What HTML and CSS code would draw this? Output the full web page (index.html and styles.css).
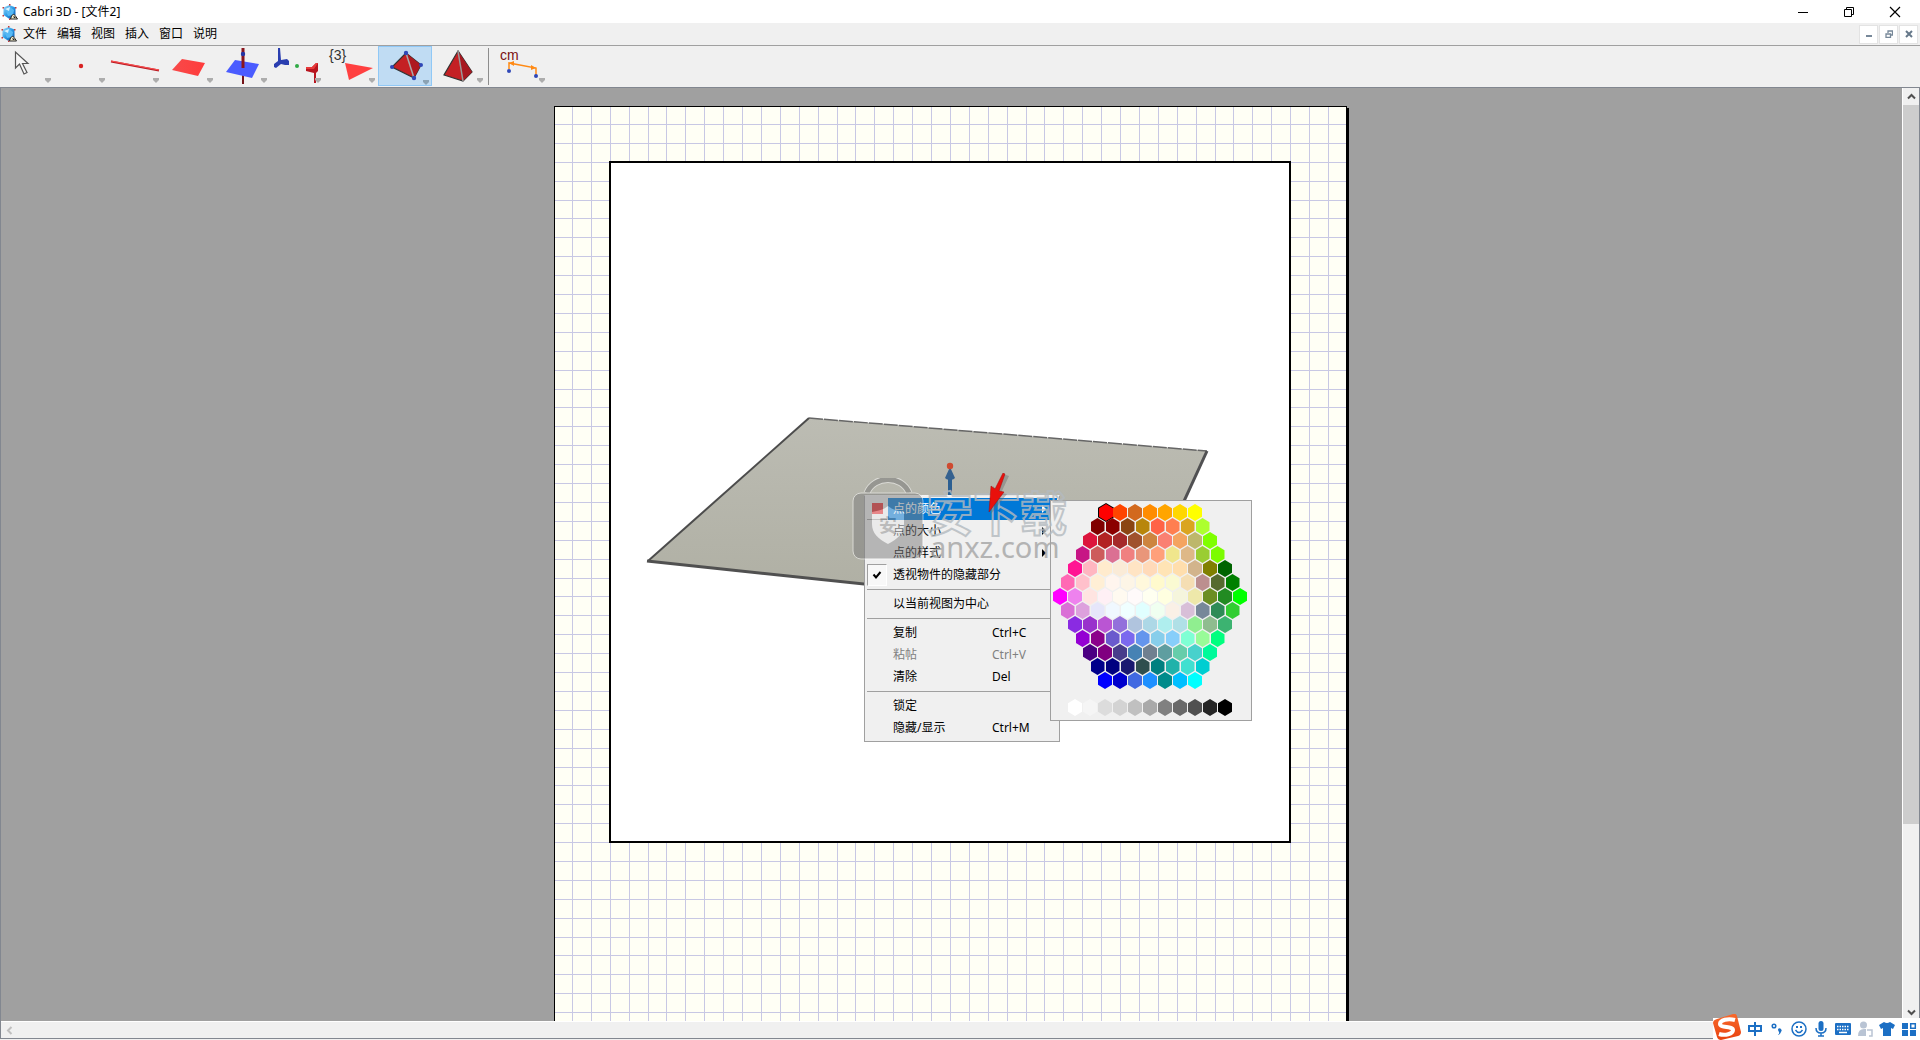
FILE: index.html
```html
<!DOCTYPE html>
<html lang="zh-CN">
<head>
<meta charset="utf-8">
<title>Cabri 3D - [文件2]</title>
<link rel="stylesheet" href="styles.css">
</head>
<body>
<svg class="defs" aria-hidden="true">
  <defs>
    <linearGradient id="gem" x1="0" y1="0" x2="1" y2="1"><stop offset="0" stop-color="#9fd8f8"/><stop offset="0.5" stop-color="#2b9be6"/><stop offset="1" stop-color="#0a4fa8"/></linearGradient>
    <linearGradient id="redface" x1="0" y1="0" x2="1" y2="0"><stop offset="0" stop-color="#f84a4a"/><stop offset="1" stop-color="#ff3c3c"/></linearGradient>
    <linearGradient id="floor" x1="0" y1="0" x2="0" y2="1"><stop offset="0" stop-color="#bcbcb3"/><stop offset="1" stop-color="#aeaea2"/></linearGradient>
    <linearGradient id="sogou" x1="0" y1="0" x2="0" y2="1"><stop offset="0" stop-color="#f8692c"/><stop offset="1" stop-color="#e8420f"/></linearGradient>
    <symbol id="app" viewBox="0 0 16 16">
      <path d="M7.500 1l6 2.500v7.500l-6 4-6-4V3.500z" fill="url(#gem)"/>
      <path d="M3 5l5-2 4 3-1 5-5 1z" fill="#55b8f4"/><path d="M3 5l5-2-1 4z" fill="#d9f2ff"/>
      <path d="M7 0h1.500v1.500H7zM.5 3H2v1.500H.5zM13 3h1.500v1.500H13zM.5 11H2v1.500H.5zM7 14.500h1.500V16H7z" fill="#c33a3a"/>
      <path d="M8.500 15l1-3 2-2 2 2 2 3z" fill="#f5efcf" stroke="#222" stroke-width="1"/><path d="M12 12v1.500h1.500" stroke="#222" fill="none"/>
    </symbol>
  </defs>
</svg>
<div class="app">
  <header class="titlebar">
    <svg class="app-icon"><use href="#app"/></svg>
    <h1>Cabri 3D - [文件2]</h1>
    <div class="window-buttons">
      <button aria-label="最小化"><svg width="12" height="12"><path d="M1 6.500h10" stroke="#000"/></svg></button>
      <button aria-label="还原"><svg width="12" height="12"><path d="M1.500 3.500h7v7h-7zM3.500 3V1.500h7v7H9" stroke="#000" fill="none"/></svg></button>
      <button aria-label="关闭"><svg width="12" height="12"><path d="M1 1l10 10M11 1L1 11" stroke="#000" stroke-width="1.200"/></svg></button>
    </div>
  </header>
  <nav class="menubar">
    <svg class="app-icon"><use href="#app"/></svg>
    <button>文件</button><button>编辑</button><button>视图</button><button>插入</button><button>窗口</button><button>说明</button>
    <div class="mdi-buttons">
      <button aria-label="最小化文档"><svg width="8" height="8"><path d="M1 6h6" stroke="#778899" stroke-width="2"/></svg></button>
      <button aria-label="还原文档"><svg width="8" height="8"><path d="M1 4h4.500v3.500H1zM3 3V1h4.500v4H6" stroke="#778899" stroke-width="1.300" fill="none"/></svg></button>
      <button aria-label="关闭文档"><svg width="8" height="8"><path d="M1 1l6 6M7 1L1 7" stroke="#66788a" stroke-width="2"/></svg></button>
    </div>
  </nav>
  <div class="toolbar">
    <button aria-label="操作"><svg viewBox="0 0 54 40"><path d="M15.500 6v16l4-4 4.500 10 3-1.500-4.500-9H28z" fill="#f7f7f7" stroke="#555" stroke-width="1.200"/><path class="drop" d="M45 32h6v2l-3 3-3-3z"/></svg></button>
    <button aria-label="点"><svg viewBox="0 0 54 40"><circle cx="27" cy="20" r="2.200" fill="#d82222"/><path class="drop" d="M45 32h6v2l-3 3-3-3z"/></svg></button>
    <button aria-label="直线"><svg viewBox="0 0 54 40"><path d="M3 15.500l48 9" stroke="#b81c24" stroke-width="2"/><path d="M3 15l48 9" stroke="#ff5050" stroke-width="1"/><path class="drop" d="M45 32h6v2l-3 3-3-3z"/></svg></button>
    <button aria-label="平面"><svg viewBox="0 0 54 40"><path d="M20 13l23 4-7 13-26-6z" fill="url(#redface)"/><path class="drop" d="M45 32h6v2l-3 3-3-3z"/></svg></button>
    <button aria-label="垂直"><svg viewBox="0 0 54 40"><path d="M27 22v16" stroke="#741318" stroke-width="2"/><path d="M19 14l24 4-7 14-26-6z" fill="#4a5cff"/><path d="M27 2v20" stroke="#8a151c" stroke-width="3"/><circle cx="27" cy="8" r="2.200" fill="#2435a5"/><path class="drop" d="M45 32h6v2l-3 3-3-3z"/></svg></button>
    <button aria-label="变换"><svg viewBox="0 0 54 40"><path d="M8 2h2l1 12 6-1 2 2v4h-4l-4-1-5 4-2-1v-3l4-3z" fill="#2a3eb0"/><circle cx="27" cy="20" r="2" fill="#30aa45"/><path d="M36 21h6l4-4h2v8l-2 2v10h-2V27l-8-2z" fill="#b8151f"/><path d="M36 21h6l4-4h2l-4 6h-8z" fill="#e83a3a"/><path class="drop" d="M45 32h6v2l-3 3-3-3z"/></svg></button>
    <button aria-label="正多边形"><svg viewBox="0 0 54 40"><text x="5" y="14" class="tool-text">{3}</text><path d="M21 17l28 5-24 12z" fill="#ff4040"/><path class="drop" d="M45 32h6v2l-3 3-3-3z"/></svg></button>
    <button class="active" aria-label="多面体" aria-pressed="true"><svg viewBox="0 0 54 40"><path d="M28 7L14 21l22 11 7-13z" fill="#c42024" stroke="#333" stroke-width="1.200"/><path d="M28 7l8 25 7-13z" fill="#ae1a20"/><path d="M28 7l8 25" stroke="#aaa" stroke-width="1.500"/><g fill="#3048b8"><circle cx="28" cy="7" r="2.200"/><circle cx="14" cy="21" r="2"/><circle cx="43" cy="19" r="2"/><circle cx="36" cy="32" r="2.200"/></g><path class="drop" d="M45 34h6v2l-3 3-3-3z"/></svg></button>
    <button aria-label="正多面体"><svg viewBox="0 0 54 40"><path d="M26 5L12 29l19 6 9-9z" fill="#c42024" stroke="#333" stroke-width="1.200"/><path d="M26 5l5 30 9-9z" fill="#a71820"/><path d="M26 5l5 30" stroke="#999" stroke-width="1.500"/><path class="drop" d="M45 32h6v2l-3 3-3-3z"/></svg></button>
    <span class="separator"></span>
    <button aria-label="测量"><svg viewBox="0 0 54 40"><text x="6" y="14" class="tool-text measure">cm</text><path d="M15 23v-6l27 5v7" stroke="#ff8a14" stroke-width="1.500" fill="none"/><path d="M15 17l5-2v5zM42 22l-5-3v5z" fill="#ff8a14"/><circle cx="15" cy="25" r="2" fill="#3048b8"/><circle cx="42" cy="30" r="2" fill="#3048b8"/><path class="drop" d="M45 32h6v2l-3 3-3-3z"/></svg></button>
  </div>

  <main class="document">
    <div class="workspace">
      <div class="page">
        <svg class="page-grid" id="page-grid"></svg>
        <div class="view">
          <svg class="scene" viewBox="611 163 678 678">
            <path d="M809 418l398 33-74 161.500L648 561z" fill="url(#floor)"/>
            <path d="M809 418l398 33" stroke="#666" stroke-width="1.500" stroke-dasharray="14 1"/>
            <path d="M809 418L648 561" stroke="#4c4c4c" stroke-width="2"/>
            <path d="M1207 451l-74 161.500" stroke="#505052" stroke-width="3"/>
            <path d="M647 561l486 51.500" stroke="#505050" stroke-width="3"/>
            <path d="M950 478v20" stroke="#2c5f92" stroke-width="4"/><path d="M950 467l5 11-2 1.500h-6l-2-1.500z" fill="#35618f"/><circle cx="950" cy="466" r="3.200" fill="#cf4a30"/>
          </svg>
        </div>

        <div class="context-menu" role="menu">
          <button class="item current"><span class="mark"><i class="swatch"></i></span><span class="label">点的颜色</span><span class="more"></span></button>
          <button class="item"><span class="mark"></span><span class="label">点的大小</span><span class="more"></span></button>
          <button class="item"><span class="mark"></span><span class="label">点的样式</span><span class="more"></span></button>
          <button class="item"><span class="mark checked"><svg width="10" height="10"><path d="M1.500 4.500L4 7.500 8.500 2" stroke="#000" stroke-width="2" fill="none"/></svg></span><span class="label">透视物件的隐藏部分</span></button>
          <hr>
          <button class="item"><span class="mark"></span><span class="label">以当前视图为中心</span></button>
          <hr>
          <button class="item"><span class="mark"></span><span class="label">复制</span><kbd>Ctrl+C</kbd></button>
          <button class="item" disabled><span class="mark"></span><span class="label">粘帖</span><kbd>Ctrl+V</kbd></button>
          <button class="item"><span class="mark"></span><span class="label">清除</span><kbd>Del</kbd></button>
          <hr>
          <button class="item"><span class="mark"></span><span class="label">锁定</span></button>
          <button class="item"><span class="mark"></span><span class="label">隐藏/显示</span><kbd>Ctrl+M</kbd></button>
        </div>
        <div class="palette" id="palette"></div>

        <div class="watermark">
          <svg class="bag" width="74" height="82" viewBox="0 0 74 82">
            <path d="M15 15C22-3 50-3 57 15" stroke="#fff" stroke-width="7" fill="none"/>
            <path d="M15 15C22-3 50-3 57 15" stroke="#777" stroke-width="5" fill="none"/>
            <rect x="1" y="15" width="70" height="66" rx="8" fill="#7c7c7c" stroke="#fff"/>
            <path d="M36 28c5 4 10 5 16 6v12c0 9-6 15-16 20-10-5-16-11-16-20V34c6-1 11-2 16-6z" fill="#e6e6e6"/>
            <text x="27" y="54" class="badge">安</text>
          </svg>
          <div class="brand"><span class="brand-name">安下载</span><span class="brand-site">anxz.com</span></div>
        </div>
        <svg class="pointer" width="24" height="42" viewBox="0 0 24 42"><path d="M18 2l3 1-8 17 6 1L3 41 5 13l4 4 7-15z" fill="#666" opacity=".4"/><path d="M15 0l2 1-6 17 5 1L1 39 3 13l4 3z" fill="#e9100c" stroke="#a50a0a" stroke-width=".5"/></svg>
      </div>
    </div>
    <div class="vscroll">
      <button aria-label="向上滚动"><svg width="9" height="9"><path d="M1 6.500l3.500-3.500L8 6.500" stroke="#505050" stroke-width="2" fill="none"/></svg></button>
      <div class="track"><div class="thumb"></div></div>
      <button aria-label="向下滚动"><svg width="9" height="9"><path d="M1 2.500L4.500 6 8 2.500" stroke="#505050" stroke-width="2" fill="none"/></svg></button>
    </div>
    <div class="hscroll"><button aria-label="向左滚动" disabled><svg width="9" height="9"><path d="M6.500 1L3 4.500 6.500 8" stroke="#bfbfbf" stroke-width="2" fill="none"/></svg></button></div>
  </main>

  <aside class="ime">
    <svg class="ime-logo" width="28" height="26" viewBox="0 0 28 26"><path d="M4 5L20 0q3-1 4 2l4 16q0 3-3 4L8 26q-3 0-4-3L0 9q0-3 4-4z" fill="url(#sogou)"/><path d="M22 6C15 4 7 6 7 10s13 2 13 6-8 6-14 4" stroke="#fff" stroke-width="4" fill="none"/></svg>
    <button aria-label="中文"><svg viewBox="0 0 16 16"><path d="M2 5h12v5H2zM8 1v14" class="line"/></svg></button>
    <button aria-label="标点"><svg viewBox="0 0 16 16"><circle cx="5" cy="5" r="1.800" class="line thin"/><path d="M9 8a2 2 0 1 1 3 3q-1 3-3 3 2-2 1-3-1-1-1-3z" fill="#1c6fc4"/></svg></button>
    <button aria-label="表情"><svg viewBox="0 0 16 16"><circle cx="8" cy="8" r="7" class="line thin"/><path d="M4.500 9q3.500 5 7 0" class="line thin"/><path d="M5 5h2v2H5zM9 5h2v2H9z" fill="#1c6fc4"/></svg></button>
    <button aria-label="语音"><svg viewBox="0 0 16 16"><rect x="5.500" y="0" width="5" height="10" rx="2.500" fill="#1c6fc4"/><path d="M3 7q0 5 5 5t5-5M8 12v3M5 15h6" class="line thin"/></svg></button>
    <button aria-label="键盘"><svg viewBox="0 0 16 16"><rect x="0" y="2" width="16" height="12" rx="1" fill="#1c6fc4"/><path d="M2 5.500h12M2 8.500h12" stroke="#fff" stroke-width="1.500" stroke-dasharray="1.500 1"/><path d="M4 11.500h8" stroke="#fff" stroke-width="1.500"/></svg></button>
    <button aria-label="账户"><svg viewBox="0 0 16 16"><circle cx="6.500" cy="4" r="3.500" fill="#b9c4d4"/><path d="M1 15q0-7 6-7h2v7z" fill="#b9c4d4"/><path d="M10 9h5v6h-3" stroke="#b9c4d4" stroke-width="1.500" fill="none"/></svg></button>
    <button aria-label="皮肤"><svg viewBox="0 0 16 16"><path d="M5 1q3 2 6 0l5 3-2 4-2-1v8H4V7L2 8 0 4z" fill="#1c6fc4"/></svg></button>
    <button aria-label="工具箱"><svg viewBox="0 0 16 16"><path d="M1 2h6v6H1zM1 9h6v6H1zM9 9h6v6H9z" fill="#1c6fc4"/><path d="M9.700 2.700h4.600v4.600H9.700z" class="line thin"/></svg></button>
  </aside>
</div>
<script src="app.js"></script>
</body>
</html>
```

FILE: app.js
```js
// Squared paper: one line every 5 mm, snapped to whole pixels.
(function () {
  var grid = document.getElementById('page-grid');
  var step = 5 * 96 / 25.4;
  var d = '';
  for (var i = 0; i < 43; i++) {
    d += 'M' + (Math.round(17 + i * step) + 0.5) + ' 0V1130';
  }
  for (var j = 0; j < 60; j++) {
    d += 'M0 ' + (Math.round(17 + j * step) + 0.5) + 'H800';
  }
  var path = document.createElementNS('http://www.w3.org/2000/svg', 'path');
  path.setAttribute('d', d);
  path.setAttribute('stroke', '#c8c8e4');
  grid.appendChild(path);
})();

// Honeycomb of named colours, then a row of greys.
(function () {
  var rows = [
    'red orangered chocolate darkorange orange gold yellow',
    'maroon darkred saddlebrown darkgoldenrod tomato coral goldenrod greenyellow',
    'crimson firebrick brown sienna peru salmon sandybrown darkkhaki chartreuse',
    'mediumvioletred indianred palevioletred lightcoral darksalmon lightsalmon khaki burlywood yellowgreen lawngreen',
    'deeppink lightpink blanchedalmond antiquewhite bisque peachpuff moccasin navajowhite tan olive darkgreen',
    'hotpink pink papayawhip seashell oldlace cornsilk lemonchiffon lightgoldenrodyellow wheat rosybrown darkolivegreen green',
    'magenta violet mistyrose lavenderblush floralwhite snow ivory lightyellow beige palegoldenrod olivedrab forestgreen lime',
    'orchid plum lavender aliceblue azure lightcyan honeydew linen thistle lightslategray seagreen limegreen',
    'blueviolet darkorchid mediumorchid mediumpurple lightsteelblue lightblue paleturquoise powderblue lightgreen darkseagreen mediumseagreen',
    'darkviolet darkmagenta slateblue mediumslateblue cornflowerblue skyblue lightskyblue aquamarine palegreen springgreen',
    'indigo purple darkslateblue steelblue slategray cadetblue mediumaquamarine mediumturquoise mediumspringgreen',
    'darkblue navy midnightblue darkslategray teal lightseagreen turquoise darkturquoise',
    'blue mediumblue royalblue dodgerblue darkcyan deepskyblue aqua',
    'white whitesmoke gainsboro lightgray silver darkgray gray dimgray #505050 #262626 black'
  ];
  var palette = document.getElementById('palette');
  rows.forEach(function (names, index) {
    var row = document.createElement('div');
    row.className = index === rows.length - 1 ? 'hex-row greys' : 'hex-row';
    names.split(' ').forEach(function (name) {
      var hex = document.createElement('button');
      hex.className = name === 'red' ? 'hex chosen' : 'hex';
      hex.setAttribute('aria-label', name);
      var fill = document.createElement('i');
      fill.style.background = name;
      hex.appendChild(fill);
      row.appendChild(hex);
    });
    palette.appendChild(row);
  });
})();
```

FILE: styles.css
```css
* { box-sizing: border-box; }
body {
  margin: 0;
  font: 12px/16px "Noto Sans", "Noto Sans CJK SC", sans-serif;
  color: #000;
  background: #f0f0f0;
}
button {
  font: inherit;
  color: inherit;
  border: 0;
  padding: 0;
  margin: 0;
  background: none;
}
svg { display: block; }
.defs { position: absolute; width: 0; height: 0; }
.app {
  position: relative;
  display: flex;
  flex-direction: column;
  height: 100vh;
  overflow: hidden;
}
.app-icon { width: 16px; height: 16px; flex: none; }

.titlebar {
  display: flex;
  align-items: center;
  height: 23px;
  padding-left: 2px;
  background: #fff;
}
.titlebar h1 { margin: 0 0 0 5px; font-size: 12px; font-weight: 400; }
.window-buttons { display: flex; margin-left: auto; }
.window-buttons button {
  display: grid;
  place-items: center;
  width: 46px;
  height: 20px;
}
.window-buttons button:last-child { width: 48px; padding-right: 2px; }

.menubar {
  display: flex;
  align-items: center;
  gap: 10px;
  height: 23px;
  padding: 0 2px 0 1px;
  border-bottom: 1px solid #a0a0a0;
}
.menubar .app-icon { margin-right: -4px; }
.mdi-buttons { display: flex; gap: 1px; margin-left: auto; }
.mdi-buttons button {
  display: grid;
  place-items: center;
  width: 19px;
  height: 19px;
  background: #fff;
  border: 1px solid #e3e3e3;
}

.toolbar { display: flex; height: 41px; }
.toolbar button { width: 54px; height: 40px; }
.toolbar svg { width: 54px; height: 40px; }
.toolbar .active {
  background: #c0dcf3;
  outline: 1px solid #90c8f6;
  outline-offset: -1px;
}
.toolbar .separator { width: 1px; height: 37px; margin: 2px 5px 0 2px; background: #8d8d8d; }
.drop { fill: #adadad; }
.active .drop { fill: #8ba3b5; }
.tool-text { font: 14px "Liberation Sans", sans-serif; fill: #333; }
.tool-text.measure { fill: #7a1010; }

.document {
  flex: 1;
  min-height: 0;
  display: grid;
  grid-template-columns: minmax(0, 1fr) 17px;
  grid-template-rows: minmax(0, 1fr) 17px;
  border: 1px solid #828790;
  margin-bottom: 1px;
}
.workspace {
  background: #a0a0a0;
  overflow: hidden;
  padding: 18px 2px 0 0;
}
.page {
  position: relative;
  width: 793px;
  height: 1122px;
  margin: 0 auto;
  background: #fffff5;
  border: 1px solid #000;
  box-shadow: 2px 2px 0 #000;
}
.page-grid { position: absolute; inset: 0; width: 100%; height: 100%; }
.view {
  position: relative;
  width: 682px;
  height: 682px;
  margin: 54px 0 0 54px;
  border: 2px solid #000;
  background: #fff;
}
.scene { width: 100%; height: 100%; }

.context-menu {
  position: absolute;
  left: 309px;
  top: 388px;
  width: 196px;
  padding: 2px;
  background: #f0f0f0;
  border: 1px solid #a0a0a0;
  border-top-color: #f4f4f4;
}
.item {
  display: flex;
  align-items: center;
  width: 100%;
  height: 22px;
  text-align: left;
}
.item .mark {
  display: grid;
  place-items: center;
  width: 20px;
  height: 22px;
  margin-right: 1px;
}
.item .label { flex: 1; height: 22px; padding-left: 5px; line-height: 22px; }
.item kbd { width: 65px; font: inherit; }
.item:disabled { color: #808080; }
.current .mark { border-bottom: 1px solid #a0a0a0; }
.current .label { background: #0078d7; color: #fff; }
.current .more { background: #0078d7; }
.more { width: 15px; height: 22px; padding: 7px 0; }
.more::before {
  content: "";
  display: block;
  border: 4px solid transparent;
  border-left-color: #000;
  border-right: 0;
  width: 0;
}
.current .more::before { border-left-color: #fff; }
.swatch { width: 11px; height: 11px; background: #e9282c; }
.mark.checked { background: #f8f8f8; border: 1px solid #a0a0a0; border-right-color: #fff; border-bottom-color: #fff; }
.context-menu hr { height: 1px; margin: 3px 0; border: 0; background: #a0a0a0; }

.palette {
  position: absolute;
  left: 495px;
  top: 393px;
  width: 202px;
  height: 221px;
  padding: 2px 1px 0 0;
  background: #f0f0f0;
  border: 1px solid #a0a0a0;
}
.hex-row { display: flex; justify-content: center; height: 14px; }
.greys { margin-top: 13px; }
.hex {
  flex: none;
  width: 15px;
  height: 19px;
  padding: 1px 1px 1px 0;
}
.hex i {
  display: block;
  height: 17px;
  clip-path: polygon(50% 0, 100% 25%, 100% 75%, 50% 100%, 0 75%, 0 25%);
}
.hex.chosen {
  padding: 1px;
  margin-right: -1px;
  width: 16px;
  background: #000;
  clip-path: polygon(50% 0, 100% 25%, 100% 75%, 50% 100%, 0 75%, 0 25%);
}

.watermark {
  position: absolute;
  left: 297px;
  top: 371px;
  display: flex;
  pointer-events: none;
}
.bag { opacity: 0.5; }
.brand { display: flex; flex-direction: column; padding-top: 10px; opacity: 0.8; }
.brand-name {
  font: 700 47px/46px "Noto Sans CJK SC", sans-serif;
  color: transparent;
  -webkit-text-stroke: 2px #b4babf;
}
.brand-site { padding-left: 4px; font-size: 29px; line-height: 26px; color: #a4a4a4; }
.badge { font: 700 18px "Noto Sans CJK SC", sans-serif; fill: #888; }
.pointer { position: absolute; left: 433px; top: 366px; }

.vscroll {
  display: flex;
  flex-direction: column;
  border-left: 1px solid #fff;
  background: #f0f0f0;
}
.vscroll button, .hscroll button {
  display: grid;
  place-items: center;
  width: 16px;
  height: 17px;
}
.track { flex: 1; }
.thumb { height: 80%; background: #cdcdcd; }
.hscroll { grid-column: 1 / -1; border-top: 1px solid #fff; }

.ime {
  position: absolute;
  right: 0;
  bottom: 0;
  display: flex;
  align-items: center;
  gap: 6px;
  height: 22px;
  padding-right: 3px;
  background: #fff;
}
.ime-logo { margin-top: -4px; }
.ime button, .ime button svg { width: 16px; height: 16px; }
.line { stroke: #1c6fc4; stroke-width: 2; fill: none; }
.line.thin { stroke-width: 1.5px; }
```
